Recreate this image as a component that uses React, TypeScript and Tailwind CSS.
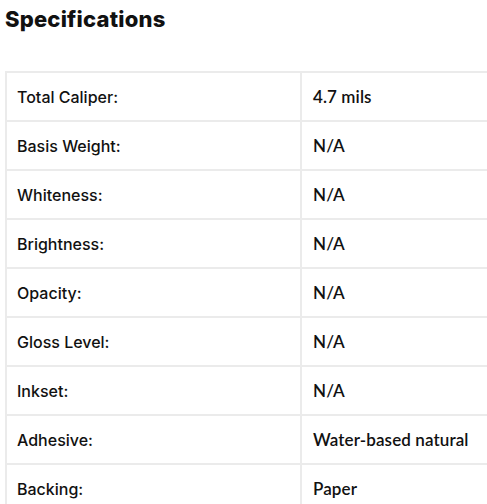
const specs: [string, string][] = [
  ["Total Caliper:", "4.7 mils"],
  ["Basis Weight:", "N/A"],
  ["Whiteness:", "N/A"],
  ["Brightness:", "N/A"],
  ["Opacity:", "N/A"],
  ["Gloss Level:", "N/A"],
  ["Inkset:", "N/A"],
  ["Adhesive:", "Water-based natural"],
  ["Backing:", "Paper"],
];

export default function App() {
  return (
    <div className="w-[487px] h-[504px] overflow-hidden bg-white pl-[5px] text-[#111]">
      <h2 className="pt-[3px] h-[71px] text-[22px] font-extrabold tracking-[0.2px] font-['Inter',sans-serif]">
        Specifications
      </h2>
      <table className="w-[500px] border-collapse border-l-2 border-t-2 border-[#ebebeb]">
        <tbody>
          {specs.map(([label, value]) => (
            <tr key={label} className="h-[49px] border-b-2 border-[#ebebeb]">
              <td className="w-[295px] pl-[10px] border-r-2 border-[#ebebeb] text-[16px] font-medium font-['Inter',sans-serif]">
                {label}
              </td>
              <td className="pl-[11px] text-[17px] font-semibold tracking-[0.1px] font-['Lato',sans-serif]">{value}</td>
            </tr>
          ))}
        </tbody>
      </table>
    </div>
  );
}
